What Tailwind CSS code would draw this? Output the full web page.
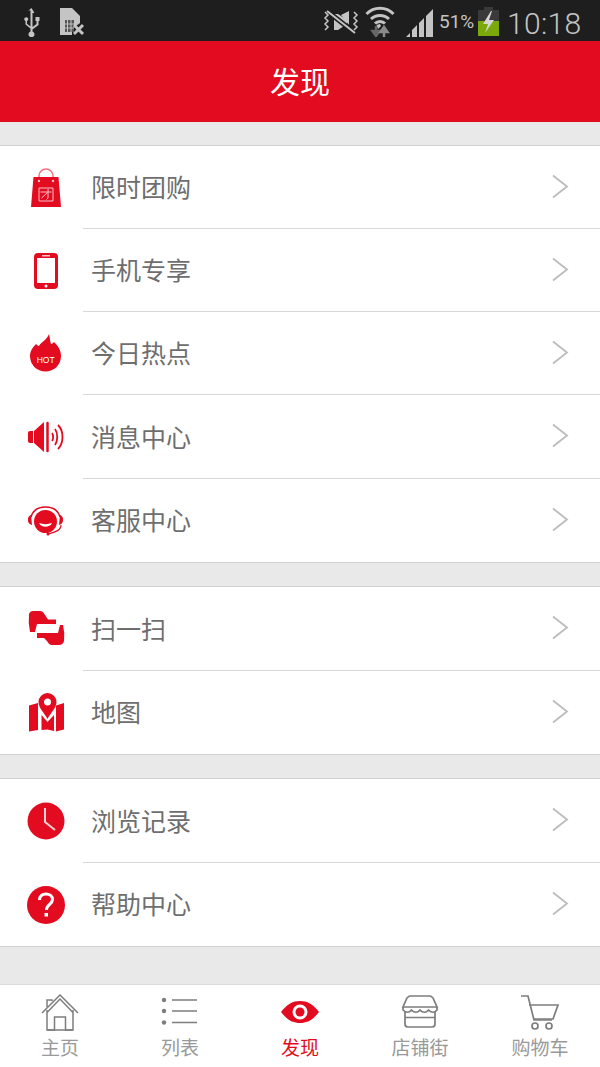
<!DOCTYPE html>
<html lang="zh">
<head>
<meta charset="utf-8">
<script src="https://cdn.jsdelivr.net/npm/@tailwindcss/browser@4"></script>
</head>
<body class="m-0 bg-[#e9e9e9]">
<div class="w-[600px] h-[1067px] overflow-hidden flex flex-col bg-[#e9e9e9] font-['Noto_Sans_CJK_SC','Noto_Sans',sans-serif]">

  <div class="h-[41px] bg-[#1e1e1e] flex items-center relative shrink-0">
    <svg class="absolute left-[22px] top-[7px]" width="20" height="30" viewBox="0 0 20 30" fill="#c4c4c4"><path d="M9.500 1l3 5h-2v14l4-3v-3h-1v-4h4v4h-1v4l-6 4.500v2a3 3 0 1 1-2 0v-3l-5-4v-3.500a2 2 0 1 1 1.500 0v2.700l3.500 2.800v-16h-2z"/></svg>
    <svg class="absolute left-[60px] top-[8px]" width="26" height="28" viewBox="0 0 26 28"><path d="M0 0h12l8 8v7l-4 3-4 3v6H0z" fill="#c4c4c4"/><path d="M5 12h9v12H5z" fill="#555"/><path d="M7.500 12v12M11 12v12M5 16h9M5 20h9" stroke="#c4c4c4" stroke-width="1"/><path d="M14 17l9 9M23 17l-9 9" stroke="#c4c4c4" stroke-width="3"/></svg>
    <svg class="absolute left-[323px] top-[10px]" width="36" height="24" viewBox="0 0 36 24" fill="none" stroke="#c4c4c4"><path d="M11 4v16h4l9-6v-4l-9-6z M11 7h4" fill="#c4c4c4" stroke="none"/><path d="M18 5l8-4v14" fill="#c4c4c4" stroke="none"/><path d="M4 1l28 22" stroke="#1e1e1e" stroke-width="5"/><path d="M4 1l28 22" stroke-width="2"/><path d="M2 2l3 3-3 3 3 3-3 3 3 3-3 3M31 2l3 3-3 3 3 3-3 3 3 3-3 3" stroke-width="1.500"/></svg>
    <svg class="absolute left-[365px] top-[6px]" width="30" height="31" viewBox="0 0 30 31" fill="none"><path d="M1.500 8a19 19 0 0 1 27 0" stroke="#c4c4c4" stroke-width="3"/><path d="M6 13a13 13 0 0 1 18 0" stroke="#c4c4c4" stroke-width="3"/><path d="M10 17.500a7 7 0 0 1 10 0" stroke="#c4c4c4" stroke-width="3"/><path d="M11.500 19l3.500-1 1 2-3 3z" fill="#c4c4c4"/><path d="M11 20v9M7.500 25l3.500 5 3.500-5z" stroke="#666" stroke-width="2.500" fill="#666"/><path d="M19 31v-9M15.500 26l3.500-5 3.500 5z" stroke="#8a8a8a" stroke-width="2.500" fill="#8a8a8a"/></svg>
    <svg class="absolute left-[406px] top-[9px]" width="28" height="28" viewBox="0 0 28 28" fill="#c4c4c4"><path d="M0 28l4-4v4zM6 28v-7l5-5v12zM13 28V14l5-5v19zM20 28V7l7-7v28z"/></svg>
    <span class="absolute left-[439px] top-[9px] text-[19px] leading-[26px] text-[#c4c4c4] font-['Roboto']">51%</span>
    <svg class="absolute left-[478px] top-[7px]" width="21" height="29" viewBox="0 0 21 29"><path d="M6 0h9v3h6v26H0V3h6z" fill="#3a3a3a"/><path d="M0 14h21v15H0z" fill="#7ba80a"/><path d="M13 4L5 17h5l-3 9 9-13h-5l3-9z" fill="#d6d6d6"/></svg>
    <span class="absolute left-[507px] top-[6px] text-[30px] leading-[36px] tracking-[0.3px] text-[#c4c4c4] font-['Roboto'] font-light">10:18</span>
  </div>

  <div class="h-[81px] bg-[#e20b20] flex items-center justify-center text-white text-[30px] pb-[3px] shrink-0">发现</div>

  <div class="h-[23px] shrink-0"></div>

  <div class="bg-white border-y border-[#d2d2d2] shrink-0">
    <a class="h-[83px] flex items-center relative">
      <div class="w-[92px] flex justify-center"><svg width="32" height="40" viewBox="0 0 32 40"><path d="M9 13V8a7 7 0 0 1 14 0v5" fill="none" stroke="#f0707e" stroke-width="1.500"/><path d="M3.500 9h25L31 39H1z" fill="#e20b20"/><circle cx="9" cy="13" r="1.200" fill="#f9c0c6"/><circle cx="23" cy="13" r="1.200" fill="#f9c0c6"/><path d="M9 20h14v13H9zM10.500 24h11M18 21v9l-1.500 1.500M17.500 24.500l-6 5.500" fill="none" stroke="#f9c0c6" stroke-width="1"/></svg></div>
      <span class="text-[25px] leading-none text-[#6e6e6e] -ml-[1px] mb-[2px]">限时团购</span>
      <svg class="absolute left-[551px] top-[28px]" width="18" height="25" viewBox="0 0 18 25" fill="none"><path d="M2 1.500l14 11-14 11" stroke="#bcbcbc" stroke-width="1.800"/></svg>
      <div class="absolute left-[83px] right-0 bottom-0 h-px bg-[#d8d8d8]"></div>
    </a>
    <a class="h-[83px] flex items-center relative">
      <div class="w-[92px] flex justify-center"><svg width="24" height="36" viewBox="0 0 24 36"><rect width="24" height="36" rx="4" fill="#e20b20"/><rect x="3" y="5" width="18" height="25" fill="#fff"/><rect x="8" y="2" width="8" height="1.500" fill="#f9c0c6"/><circle cx="12" cy="33" r="1.500" fill="#fff"/></svg></div>
      <span class="text-[25px] leading-none text-[#6e6e6e] -ml-[1px] mb-[2px]">手机专享</span>
      <svg class="absolute left-[551px] top-[28px]" width="18" height="25" viewBox="0 0 18 25" fill="none"><path d="M2 1.500l14 11-14 11" stroke="#bcbcbc" stroke-width="1.800"/></svg>
      <div class="absolute left-[83px] right-0 bottom-0 h-px bg-[#d8d8d8]"></div>
    </a>
    <a class="h-[83px] flex items-center relative">
      <div class="w-[92px] flex justify-center pb-[2px]"><svg width="32" height="38" viewBox="0 0 32 38"><path d="M19 0C20 4 20 7 21 10C22 10 23 9 24 8C28 12 31 16 31 22C31 31 24 37.500 15.500 37.500C7 37.500 0 31 0 22C0 17 3 13 6 10C7 11 8 12 9 12C11 8 17 6 19 0z" fill="#e20b20"/><text x="15.700" y="29" text-anchor="middle" font-family="Liberation Sans" font-size="8.500" fill="#fff">HOT</text></svg></div>
      <span class="text-[25px] leading-none text-[#6e6e6e] -ml-[1px] mb-[2px]">今日热点</span>
      <svg class="absolute left-[551px] top-[28px]" width="18" height="25" viewBox="0 0 18 25" fill="none"><path d="M2 1.500l14 11-14 11" stroke="#bcbcbc" stroke-width="1.800"/></svg>
      <div class="absolute left-[83px] right-0 bottom-0 h-px bg-[#d8d8d8]"></div>
    </a>
    <a class="h-[84px] flex items-center relative">
      <div class="w-[92px] flex justify-center"><svg width="36" height="32" viewBox="0 0 36 32" fill="none"><path d="M0 12q0-2 2-2h3v12H2q-2 0-2-2z" fill="#e20b20"/><path d="M6 10L16 1v30L6 22z" fill="#e20b20"/><path d="M19.500 2v28" stroke="#e20b20" stroke-width="2.500" stroke-linecap="round"/><path d="M24 12c1.500 2 1.500 6 0 8M27 8c3 4 3 12 0 16M30 4c6 6 6 18 0 24" stroke="#e20b20" stroke-width="1.800"/></svg></div>
      <span class="text-[25px] leading-none text-[#6e6e6e] -ml-[1px] mb-[2px]">消息中心</span>
      <svg class="absolute left-[551px] top-[28px]" width="18" height="25" viewBox="0 0 18 25" fill="none"><path d="M2 1.500l14 11-14 11" stroke="#bcbcbc" stroke-width="1.800"/></svg>
      <div class="absolute left-[83px] right-0 bottom-0 h-px bg-[#d8d8d8]"></div>
    </a>
    <a class="h-[83px] flex items-center relative">
      <div class="w-[92px] flex justify-center"><svg width="38" height="30" viewBox="0 0 38 30"><path d="M4 11C6 4 12 1 18.500 1S31 4 33 11" fill="none" stroke="#e20b20" stroke-width="1.500"/><path d="M4 9a5 5 0 0 0-3 5 5 5 0 0 0 4 5z" fill="#e20b20"/><path d="M33 9a5 5 0 0 1 3 5 5 5 0 0 1-4 5z" fill="#e20b20"/><circle cx="18.500" cy="15.500" r="11.500" fill="#e20b20"/><path d="M12 17c2 5 11 5 13 0-4 1.500-9 1.500-13 0z" fill="#fff"/><path d="M34 19c0 5-5 7-13 9" fill="none" stroke="#e20b20" stroke-width="1.200"/><circle cx="21" cy="28" r="1.500" fill="#e20b20"/></svg></div>
      <span class="text-[25px] leading-none text-[#6e6e6e] -ml-[1px] mb-[2px]">客服中心</span>
      <svg class="absolute left-[551px] top-[28px]" width="18" height="25" viewBox="0 0 18 25" fill="none"><path d="M2 1.500l14 11-14 11" stroke="#bcbcbc" stroke-width="1.800"/></svg>
    </a>
  </div>

  <div class="h-[23px] shrink-0"></div>

  <div class="bg-white border-y border-[#d2d2d2] shrink-0">
    <a class="h-[84px] flex items-center relative">
      <div class="w-[92px] flex justify-center pb-[2px]"><svg width="37" height="35" viewBox="0 0 37 35" fill="#e20b20"><path d="M1 3Q2 0 5 0H12Q15 0 17 4L20 8.500H28V13H9L7 21H2Q0 12 1 3z"/><path d="M36 30Q35 34 31 34H24Q21 34 19 30L16 27H9V22H30L32 14H35Q37 22 36 30z"/></svg></div>
      <span class="text-[25px] leading-none text-[#6e6e6e] -ml-[1px] mb-[2px]">扫一扫</span>
      <svg class="absolute left-[551px] top-[28px]" width="18" height="25" viewBox="0 0 18 25" fill="none"><path d="M2 1.500l14 11-14 11" stroke="#bcbcbc" stroke-width="1.800"/></svg>
      <div class="absolute left-[83px] right-0 bottom-0 h-px bg-[#d8d8d8]"></div>
    </a>
    <a class="h-[83px] flex items-center relative">
      <div class="w-[92px] flex justify-center"><svg width="35" height="39" viewBox="0 0 35 39" fill="#e20b20"><path d="M0 12.500L9 10V37L0 38.500zM27 12.500L35 10V36.500L27 38.500zM12.500 22L18.500 29L25 22V38L18.500 36.500L12.500 37z"/><path d="M18.500 0a9 9 0 0 0-9 9c0 6 6 11 9 17 3-6 9-11 9-17a9 9 0 0 0-9-9z"/><circle cx="18.500" cy="9" r="3.500" fill="#fff"/></svg></div>
      <span class="text-[25px] leading-none text-[#6e6e6e] -ml-[1px] mb-[2px]">地图</span>
      <svg class="absolute left-[551px] top-[28px]" width="18" height="25" viewBox="0 0 18 25" fill="none"><path d="M2 1.500l14 11-14 11" stroke="#bcbcbc" stroke-width="1.800"/></svg>
    </a>
  </div>

  <div class="h-[23px] shrink-0"></div>

  <div class="bg-white border-y border-[#d2d2d2] shrink-0">
    <a class="h-[84px] flex items-center relative">
      <div class="w-[92px] flex justify-center"><svg width="38" height="38" viewBox="0 0 38 38"><circle cx="19" cy="19" r="18.500" fill="#e20b20"/><path d="M18 6v14l10 8" fill="none" stroke="#f9d0d4" stroke-width="2"/></svg></div>
      <span class="text-[25px] leading-none text-[#6e6e6e] -ml-[1px] mb-[2px]">浏览记录</span>
      <svg class="absolute left-[551px] top-[28px]" width="18" height="25" viewBox="0 0 18 25" fill="none"><path d="M2 1.500l14 11-14 11" stroke="#bcbcbc" stroke-width="1.800"/></svg>
      <div class="absolute left-[83px] right-0 bottom-0 h-px bg-[#d8d8d8]"></div>
    </a>
    <a class="h-[83px] flex items-center relative">
      <div class="w-[92px] flex justify-center"><svg width="38" height="38" viewBox="0 0 38 38"><circle cx="19" cy="19" r="19" fill="#e20b20"/><path d="M12.500 14c0-4 3-6 6.500-6s6.500 2 6.500 5.500c0 5-6 5-6 10.500" fill="none" stroke="#fff" stroke-width="3"/><rect x="17.500" y="27" width="3.500" height="3.500" fill="#fff"/></svg></div>
      <span class="text-[25px] leading-none text-[#6e6e6e] -ml-[1px] mb-[2px]">帮助中心</span>
      <svg class="absolute left-[551px] top-[28px]" width="18" height="25" viewBox="0 0 18 25" fill="none"><path d="M2 1.500l14 11-14 11" stroke="#bcbcbc" stroke-width="1.800"/></svg>
    </a>
  </div>

  <div class="grow"></div>

  <div class="h-[83px] bg-white border-t border-[#dcdcdc] grid grid-cols-5 shrink-0">
    <div class="flex flex-col items-center pt-[9px]">
      <svg width="38" height="37" viewBox="0 0 38 37" fill="none" stroke="#7d7d7d" stroke-width="1.500"><path d="M1 19L19 1l18 18"/><path d="M6 18.500L19 5l13 13.500"/><path d="M6 16v20h7.500V23h11v13H32V16"/><path d="M6 13V6h5v1"/><path d="M6 36h26"/></svg>
      <span class="text-[19px] leading-[24px] mt-[4px] text-[#999999]">主页</span>
    </div>
    <div class="flex flex-col items-center pt-[9px]">
      <svg width="38" height="37" viewBox="0 0 38 37"><circle cx="3" cy="6" r="2.200" fill="#7d7d7d"/><circle cx="3" cy="17" r="2.200" fill="#7d7d7d"/><circle cx="3" cy="28.500" r="2.200" fill="#7d7d7d"/><path d="M11 6h25M11 17h25M11 28.500h25" stroke="#7d7d7d" stroke-width="1.700"/></svg>
      <span class="text-[19px] leading-[24px] mt-[4px] text-[#999999]">列表</span>
    </div>
    <div class="flex flex-col items-center pt-[9px]">
      <svg width="38" height="37" viewBox="0 0 38 37"><path d="M0 18C6 10 12 7 19 7s13 3 19 11c-6 8-12 11-19 11S6 26 0 18z" fill="#e20b20"/><circle cx="19" cy="18" r="7.500" fill="#fff"/><circle cx="19" cy="18" r="4.500" fill="#e20b20"/></svg>
      <span class="text-[19px] leading-[24px] mt-[4px] text-[#e20b20]">发现</span>
    </div>
    <div class="flex flex-col items-center pt-[9px]">
      <svg width="38" height="37" viewBox="0 0 38 37" fill="none" stroke="#7d7d7d" stroke-width="1.700"><path d="M9 2h20c1 0 2 1 3 2l4 9H2l4-9c1-1 2-2 3-2z"/><path d="M2 13v3c3 3 6 3 8.500 0 3 3 6 3 8.500 0 3 3 6 3 8.500 0 3 3 6 3 8.500 0v-3"/><path d="M4 18v12c0 2 1 3 3 3h24c2 0 3-1 3-3V18M4 23.500h30"/></svg>
      <span class="text-[19px] leading-[24px] mt-[4px] text-[#999999]">店铺街</span>
    </div>
    <div class="flex flex-col items-center pt-[9px]">
      <svg width="38" height="37" viewBox="0 0 38 37" fill="none" stroke="#7d7d7d" stroke-width="1.700"><path d="M0 2h7l6 24h18"/><path d="M8 11h29l-5 14H13"/><circle cx="14" cy="32" r="3"/><circle cx="28" cy="32" r="3"/></svg>
      <span class="text-[19px] leading-[24px] mt-[4px] text-[#999999]">购物车</span>
    </div>
  </div>
</div>
</body>
</html>
